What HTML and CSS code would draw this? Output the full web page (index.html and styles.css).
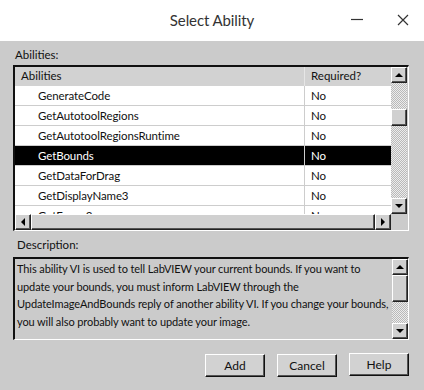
FILE: index.html
```html
<!DOCTYPE html>
<html lang="en">
<head>
    <meta charset="UTF-8">
    <meta name="viewport" content="width=device-width, initial-scale=1.0">
    <title>Select Ability</title>
    <link rel="stylesheet" href="styles.css">
</head>
<body>
    <div class="titlebar">
        <span></span>
        <span class="title">Select Ability</span>
        <div class="controls">
            <svg width="14" height="14" viewBox="0 0 14 14"><path d="M1 6.5h12" stroke="#333" stroke-width="1.2" fill="none"/></svg>
            <svg width="14" height="14" viewBox="0 0 14 14"><path d="M2 2l10 10M12 2L2 12" stroke="#333" stroke-width="1.2" fill="none"/></svg>
        </div>
    </div>

    <div class="dialog">
        <div class="label">Abilities:</div>
        <div class="listbox">
            <div class="view">
                <div class="row head"><span class="c1">Abilities</span><span class="c2">Required?</span></div>
                <div class="row"><span class="c1">GenerateCode</span><span class="c2">No</span></div>
                <div class="row"><span class="c1">GetAutotoolRegions</span><span class="c2">No</span></div>
                <div class="row"><span class="c1">GetAutotoolRegionsRuntime</span><span class="c2">No</span></div>
                <div class="row selected"><span class="c1">GetBounds</span><span class="c2">No</span></div>
                <div class="row"><span class="c1">GetDataForDrag</span><span class="c2">No</span></div>
                <div class="row"><span class="c1">GetDisplayName3</span><span class="c2">No</span></div>
                <div class="row"><span class="c1">GetErrors3</span><span class="c2">No</span></div>
            </div>
            <div class="vscroll list-v">
                <div class="sbtn"><i class="arr up"></i></div>
                <div class="track t1"></div>
                <div class="thumb"></div>
                <div class="track t2"></div>
                <div class="sbtn"><i class="arr down"></i></div>
            </div>
            <div class="hscroll">
                <div class="sbtn"><i class="arr left"></i></div>
                <div class="thumb hthumb"></div>
                <div class="sbtn"><i class="arr right"></i></div>
            </div>
            <div class="corner"></div>
        </div>

        <div class="label desc-label">Description:</div>
        <div class="descbox">
            <p class="desc">This ability VI is used to tell LabVIEW your current bounds. If you want to<br>update your bounds, you must inform LabVIEW through the<br>UpdateImageAndBounds reply of another ability VI. If you change your bounds,<br>you will also probably want to update your image.</p>
            <div class="vscroll desc-v">
                <div class="sbtn"><i class="arr up"></i></div>
                <div class="thumb dthumb"></div>
                <div class="track"></div>
                <div class="sbtn"><i class="arr down"></i></div>
            </div>
        </div>

        <div class="buttons">
            <button class="btn">Add</button>
            <button class="btn">Cancel</button>
            <button class="btn help">Help</button>
        </div>
    </div>
</body>
</html>
```

FILE: styles.css
```css
body { margin: 0; width: 424px; height: 390px; background: #cbcbcb; font-family: Lato, "Liberation Sans", sans-serif; color: #111; overflow: hidden; }

/* window title */
.titlebar { height: 41px; background: #fff; display: grid; grid-template-columns: 1fr auto 1fr; align-items: center; }
.title { font-size: 15px; letter-spacing: -0.1px; color: #333; padding-bottom: 1px; }
.controls { justify-self: end; display: flex; gap: 32px; padding-right: 14px; padding-bottom: 2px; }

.dialog { padding: 5px 0 0 13px; }
.label { font-size: 11.5px; height: 18px; line-height: 18px; padding-left: 2px; margin-bottom: 1px; }
.desc-label { margin: 5px 0 3px; padding-left: 4px; }

/* abilities list */
.listbox { width: 393px; display: grid; grid-template-columns: 376px 16px; grid-template-rows: 147px 16px; border-top: 2px solid #111; border-left: 2px solid #111; border-right: 1px solid #fff; border-bottom: 1px solid #fff; }
.view { background: #fff; overflow: hidden; }
.row { display: grid; grid-template-columns: 290px 1fr; height: 20px; line-height: 19px; font-size: 11.5px; letter-spacing: -0.1px; border-bottom: 1px solid #cdcdcd; box-sizing: border-box; }
.row .c1 { padding-left: 23px; border-right: 1px solid #cdcdcd; }
.row .c2 { padding-left: 6px; }
.row.head { height: 19px; line-height: 18px; background: #d2d2d2; border-bottom: none; letter-spacing: 0; }
.row.head .c1 { padding-left: 6px; border-right-color: #e6e6e6; }
.row.selected { background: #000; color: #fff; }

/* scrollbars */
.vscroll { display: flex; flex-direction: column; }
.sbtn { flex: none; width: 16px; height: 16px; box-sizing: border-box; background: #d0d0d0; border: 1px solid; border-color: #fff #222 #222 #fff; box-shadow: inset -1px -1px 0 #555; display: flex; align-items: center; justify-content: center; }
.track { background: repeating-conic-gradient(#ececec 0 25%, #b9b9b9 0 50%) 0 0 / 2px 2px; }
.list-v .t1 { height: 26px; }
.list-v .t2 { flex: 1; }
.thumb { flex: none; height: 17px; box-sizing: border-box; background: #d0d0d0; border: 1px solid; border-color: #fff #222 #222 #fff; box-shadow: inset -1px -1px 0 #555; }
.hscroll { display: flex; }
.hthumb { flex: 1; height: 16px; }
.corner { background: #cbcbcb; }

.arr { width: 0; height: 0; border: 4px solid transparent; }
.arr.up { border-bottom-color: #000; border-top-width: 0; }
.arr.down { border-top-color: #000; border-bottom-width: 0; }
.arr.left { border-right-color: #000; border-left-width: 0; }
.arr.right { border-left-color: #000; border-right-width: 0; }

/* description */
.descbox { width: 393px; height: 80px; display: flex; border-top: 2px solid #111; border-left: 2px solid #111; border-right: 1px solid #fff; border-bottom: 1px solid #fff; }
.desc { flex: 1; margin: 0; padding: 1px 0 0 2px; font-size: 11px; letter-spacing: -0.1px; line-height: 17.5px; white-space: nowrap; overflow: hidden; }
.desc-v { width: 16px; }
.dthumb { height: 27px; }
.desc-v .track { flex: 1; }

/* buttons */
.buttons { display: flex; justify-content: flex-end; gap: 12px; padding-right: 15px; margin-top: 14px; }
.btn { width: 60px; height: 23px; font-family: inherit; font-size: 12px; color: #111; background: #d2d2d2; border: 1px solid; border-color: #fff #111 #111 #fff; box-shadow: inset -1px -1px 0 #555; padding: 0; }
.help { margin-top: -1px; }
```
